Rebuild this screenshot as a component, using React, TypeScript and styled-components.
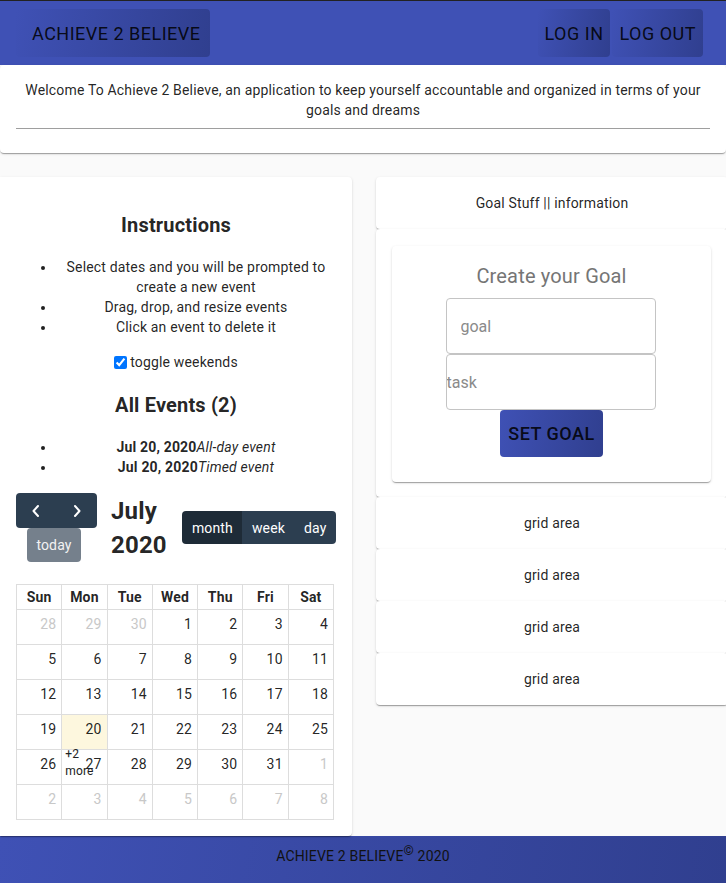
import React from "react";
import styled, { createGlobalStyle } from "styled-components";

const GlobalStyle = createGlobalStyle`
  body {
    margin: 0;
    background: #fafafa;
    font-family: Roboto, "Liberation Sans", sans-serif;
    color: rgba(0, 0, 0, 0.87);
    letter-spacing: 0.01071em;
    overflow-x: hidden;
  }
`;

const paperShadow =
  "0px 2px 1px -1px rgba(0,0,0,0.2), 0px 1px 1px 0px rgba(0,0,0,0.14), 0px 1px 3px 0px rgba(0,0,0,0.12)";

type Day = { n: number; other?: boolean; today?: boolean; more?: boolean };

const weeks: Day[][] = [
  [{ n: 28, other: true }, { n: 29, other: true }, { n: 30, other: true }, { n: 1 }, { n: 2 }, { n: 3 }, { n: 4 }],
  [5, 6, 7, 8, 9, 10, 11].map((n) => ({ n })),
  [12, 13, 14, 15, 16, 17, 18].map((n) => ({ n })),
  [{ n: 19 }, { n: 20, today: true }, { n: 21 }, { n: 22 }, { n: 23 }, { n: 24 }, { n: 25 }],
  [{ n: 26 }, { n: 27, more: true }, { n: 28 }, { n: 29 }, { n: 30 }, { n: 31 }, { n: 1, other: true }],
  [2, 3, 4, 5, 6, 7, 8].map((n) => ({ n, other: true })),
];

const dayNames = ["Sun", "Mon", "Tue", "Wed", "Thu", "Fri", "Sat"];

const Chevron = ({ dir }: { dir: "left" | "right" }) => (
  <svg width="10" height="14" viewBox="0 0 10 14">
    <path
      d={dir === "left" ? "M7 2 L2.5 7 L7 12" : "M3 2 L7.5 7 L3 12"}
      fill="none"
      stroke="#fff"
      strokeWidth="2"
      strokeLinecap="round"
      strokeLinejoin="round"
    />
  </svg>
);

export default function App() {
  return (
    <>
      <GlobalStyle />
      <AppBar>
        <NavButton $pad="0 9px 0 16px">Achieve 2 Believe</NavButton>
        <NavGroup>
          <NavButton $pad="0 7px">Log in</NavButton>
          <NavButton $pad="0 7px">Log out</NavButton>
        </NavGroup>
      </AppBar>

      <Welcome>
        <WelcomeText>
          Welcome To Achieve 2 Believe, an application to keep yourself accountable and organized in terms of your
          goals and dreams
        </WelcomeText>
        <Divider />
      </Welcome>

      <Main>
        <CalendarCard>
          <SideHeading>Instructions</SideHeading>
          <SideList>
            <li>Select dates and you will be prompted to create a new event</li>
            <li>Drag, drop, and resize events</li>
            <li>Click an event to delete it</li>
          </SideList>
          <ToggleRow>
            <input type="checkbox" defaultChecked />
            toggle weekends
          </ToggleRow>
          <SideHeading>All Events (2)</SideHeading>
          <SideList>
            <li>
              <b>Jul 20, 2020</b>
              <i>All-day event</i>
            </li>
            <li>
              <b>Jul 20, 2020</b>
              <i>Timed event</i>
            </li>
          </SideList>

          <Toolbar>
            <NavChunk>
              <BtnGroup>
                <CalButton $w={40}>
                  <Chevron dir="left" />
                </CalButton>
                <CalButton $w={41}>
                  <Chevron dir="right" />
                </CalButton>
              </BtnGroup>
              <TodayButton>today</TodayButton>
            </NavChunk>
            <Title>July 2020</Title>
            <BtnGroup>
              <CalButton $active>month</CalButton>
              <CalButton>week</CalButton>
              <CalButton>day</CalButton>
            </BtnGroup>
          </Toolbar>

          <Table>
            <thead>
              <tr>
                {dayNames.map((d) => (
                  <HeadCell key={d}>{d}</HeadCell>
                ))}
              </tr>
            </thead>
            <tbody>
              {weeks.map((w, i) => (
                <tr key={i}>
                  {w.map((d, j) => (
                    <DayCell key={j} $other={d.other} $today={d.today}>
                      {d.n}
                      {d.more && <MoreLink>+2 more</MoreLink>}
                    </DayCell>
                  ))}
                </tr>
              ))}
            </tbody>
          </Table>
        </CalendarCard>

        <RightColumn>
          <Strip>Goal Stuff || information</Strip>
          <GoalPaper>
            <GoalCard>
              <GoalTitle>Create your Goal</GoalTitle>
              <Field $indent placeholder="goal" />
              <Field placeholder="task" />
              <SetGoal>Set Goal</SetGoal>
            </GoalCard>
          </GoalPaper>
          <Strip>grid area</Strip>
          <Strip>grid area</Strip>
          <Strip>grid area</Strip>
          <Strip>grid area</Strip>
        </RightColumn>
      </Main>

      <Footer>
        ACHIEVE 2 BELIEVE<Copy>©</Copy> 2020
      </Footer>
    </>
  );
}

const blueGradient = "linear-gradient(100deg, #3f51b5 0%, #303f8f 100%)";

const AppBar = styled.header`
  height: 64px;
  border-top: 1px solid #222;
  background: #3f51b5;
  display: flex;
  align-items: center;
  justify-content: space-between;
  padding: 0 23px 0 16px;
`;

const NavGroup = styled.div`
  display: flex;
  gap: 2px;
`;

const NavButton = styled.button<{ $pad: string }>`
  height: 48px;
  padding: ${(p) => p.$pad};
  border: none;
  border-radius: 4px;
  background: ${blueGradient};
  color: rgba(0, 0, 0, 0.87);
  font-family: Roboto, sans-serif;
  font-size: 18px;
  font-weight: 400;
  letter-spacing: 0.5px;
  text-transform: uppercase;
`;

const Paper = styled.div`
  background: #fff;
  border-radius: 4px;
  box-shadow: ${paperShadow};
`;

const Welcome = styled(Paper)`
  padding: 15px 16px 24px;
  text-align: center;
`;

const WelcomeText = styled.div`
  font-size: 14px;
  line-height: 20px;
  padding: 0 8px;
`;

const Divider = styled.div`
  border-top: 1px solid #9e9e9e;
  margin-top: 8px;
`;

const Main = styled.main`
  display: grid;
  grid-template-columns: 352px 352px;
  column-gap: 24px;
  align-items: start;
  margin-top: 24px;
`;

const CalendarCard = styled(Paper)`
  padding: 16px;
  text-align: center;
  font-size: 14px;
  border-top-left-radius: 0;
  border-bottom-left-radius: 0;
`;

const SideHeading = styled.h2`
  font-size: 20px;
  line-height: 24px;
  font-weight: 700;
  margin: 20px 0;
`;

const SideList = styled.ul`
  margin: 14px 0;
  padding-left: 40px;
  line-height: 20px;
`;

const ToggleRow = styled.label`
  display: flex;
  align-items: center;
  justify-content: center;
  line-height: 22px;
  input {
    margin: 0 3px 0 0;
    width: 13px;
    height: 13px;
  }
`;

const Toolbar = styled.div`
  display: flex;
  align-items: center;
  justify-content: space-between;
  margin: 16px 0 22px;
  text-align: center;
`;

const NavChunk = styled.div`
  display: flex;
  flex-direction: column;
  align-items: center;
  width: 81px;
`;

const BtnGroup = styled.div`
  display: flex;
  border-radius: 4px;
  overflow: hidden;
`;

const CalButton = styled.button<{ $active?: boolean; $w?: number }>`
  height: ${(p) => (p.$w ? 35 : 33)}px;
  ${(p) => (p.$w ? `width: ${p.$w}px;` : "")}
  padding: 0 9.5px;
  border: none;
  background: ${(p) => (p.$active ? "#1e2b37" : "#2c3e50")};
  color: #fff;
  font-family: Roboto, sans-serif;
  font-size: 14px;
  letter-spacing: 0.15px;
  display: flex;
  align-items: center;
  justify-content: center;
`;

const TodayButton = styled.button`
  height: 34px;
  width: 54px;
  border: none;
  border-radius: 4px;
  background: #75808c;
  color: #f2f2f2;
  font-family: Roboto, sans-serif;
  font-size: 14px;
  letter-spacing: 0.15px;
  margin-left: -5px;
`;

const Title = styled.h2`
  width: min-content;
  margin: 0 0 0 14px;
  font-size: 24px;
  line-height: 34px;
  font-weight: 700;
  text-align: left;
  flex: 1;
`;

const Table = styled.table`
  width: 318px;
  border-collapse: collapse;
  table-layout: fixed;
  font-size: 14px;
`;

const HeadCell = styled.th`
  border: 1px solid #ddd;
  height: 24px;
  padding: 0;
  font-weight: 700;
`;

const DayCell = styled.td<{ $other?: boolean; $today?: boolean }>`
  position: relative;
  border: 1px solid #ddd;
  height: 30px;
  padding: 4px 5px 0 0;
  vertical-align: top;
  text-align: right;
  line-height: 20px;
  color: ${(p) => (p.$other ? "#c8c8c8" : "rgba(0,0,0,0.87)")};
  background: ${(p) => (p.$today ? "#fdf7de" : "transparent")};
`;

const MoreLink = styled.span`
  position: absolute;
  left: 3px;
  top: -4px;
  width: 28px;
  text-align: left;
  font-size: 12px;
  line-height: 17px;
  color: #222;
`;

const RightColumn = styled.div`
  display: flex;
  flex-direction: column;
`;

const Strip = styled(Paper)`
  height: 52px;
  display: flex;
  align-items: center;
  justify-content: center;
  font-size: 14px;
`;

const GoalPaper = styled(Paper)`
  padding: 17px 17px 15px 16px;
`;

const GoalCard = styled(Paper)`
  display: flex;
  flex-direction: column;
  align-items: center;
  padding: 18px 0 25px;
`;

const GoalTitle = styled.div`
  font-size: 20px;
  line-height: 24px;
  color: #757575;
  margin-bottom: 10px;
`;

const Field = styled.input<{ $indent?: boolean }>`
  box-sizing: border-box;
  width: 210px;
  height: 56px;
  margin: 0 0 0 -2px;
  padding: 0 0 0 ${(p) => (p.$indent ? "14px" : "0")};
  border: 1px solid #c4c4c4;
  border-radius: 4px;
  font-family: Roboto, sans-serif;
  font-size: 16px;
  &::placeholder {
    color: #8a8a8a;
  }
`;

const SetGoal = styled.button`
  width: 103px;
  height: 47px;
  border: none;
  border-radius: 4px;
  background: ${blueGradient};
  color: rgba(0, 0, 0, 0.87);
  font-family: Roboto, sans-serif;
  font-size: 18px;
  font-weight: 500;
  letter-spacing: 0.5px;
  text-transform: uppercase;
`;

const Footer = styled.footer`
  background: linear-gradient(100deg, #3f51b5 0%, #303f8f 100%);
  padding: 10px 0 20px;
  text-align: center;
  font-size: 14px;
  line-height: 20px;
  color: #111;
`;

const Copy = styled.sup`
  font-size: 13px;
  line-height: 0;
`;
